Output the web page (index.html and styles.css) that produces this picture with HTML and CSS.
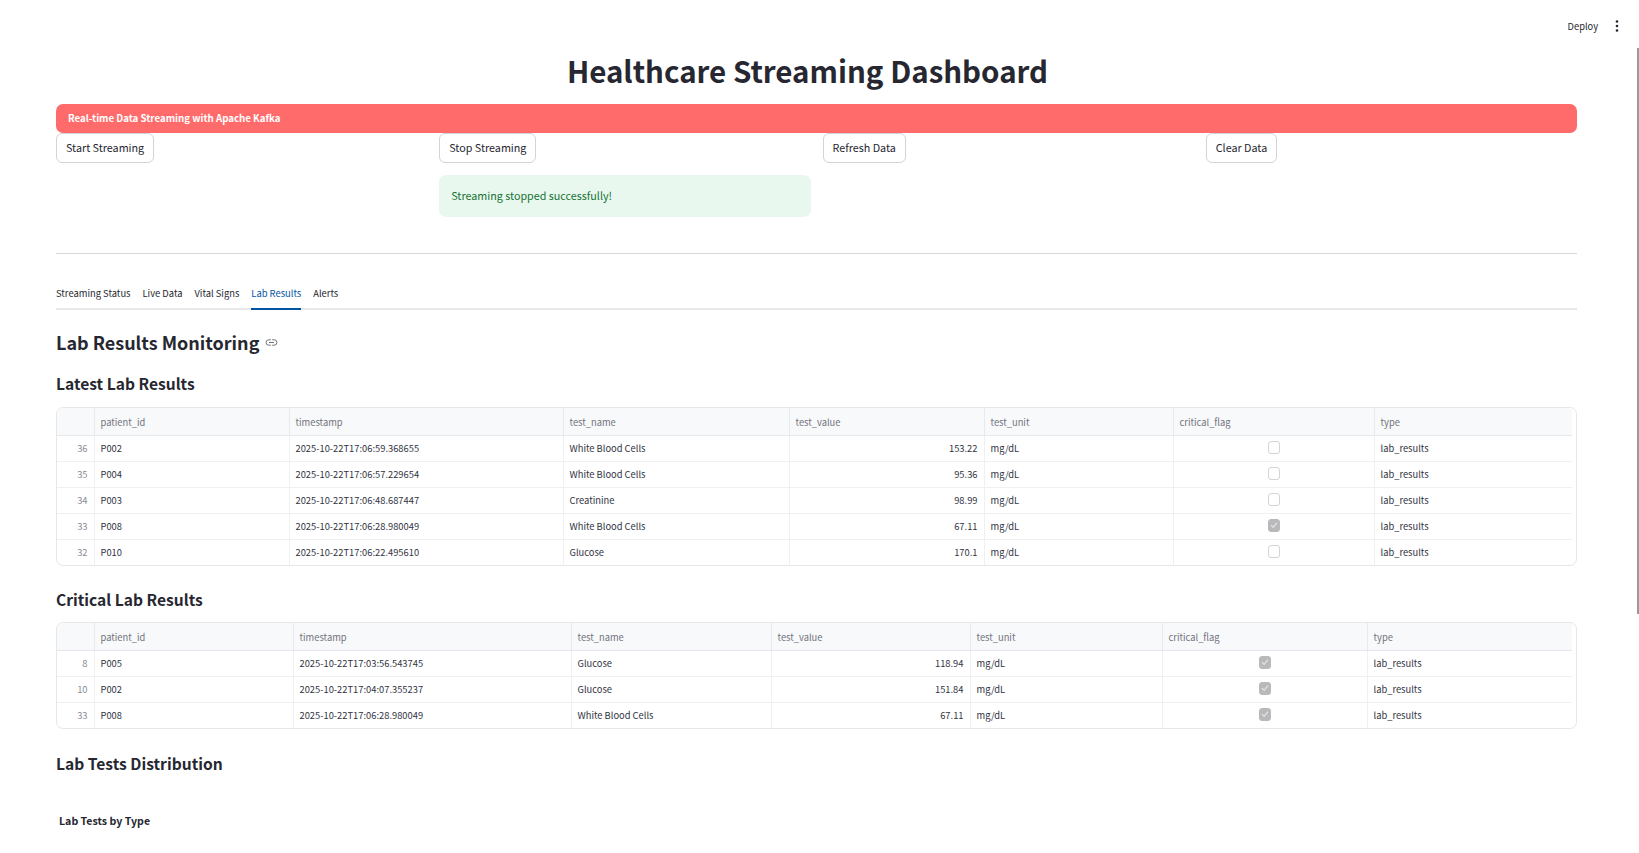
FILE: index.html
```html
<!DOCTYPE html>
<html lang="en">
<head>
  <meta charset="UTF-8">
  <meta name="viewport" content="width=device-width, initial-scale=1.0">
  <title>Healthcare Streaming Dashboard</title>
  <link rel="stylesheet" href="styles.css">
</head>
<body>

<header class="toolbar">
  <span class="deploy">Deploy</span>
  <svg class="menu-dots" width="4" height="12" viewBox="0 0 4 12"><circle cx="2" cy="1.5" r="1.3"/><circle cx="2" cy="6" r="1.3"/><circle cx="2" cy="10.5" r="1.3"/></svg>
</header>

<div class="scroll-thumb"></div>

<main class="page">
  <h1 class="title">Healthcare Streaming Dashboard</h1>
  <div class="banner">Real-time Data Streaming with Apache Kafka</div>

  <div class="controls">
    <div class="control"><button>Start Streaming</button></div>
    <div class="control">
      <button>Stop Streaming</button>
      <div class="success">Streaming stopped successfully!</div>
    </div>
    <div class="control"><button>Refresh Data</button></div>
    <div class="control"><button>Clear Data</button></div>
  </div>

  <hr class="divider">

  <nav class="tabs">
    <span class="tab">Streaming Status</span>
    <span class="tab">Live Data</span>
    <span class="tab">Vital Signs</span>
    <span class="tab active">Lab Results</span>
    <span class="tab">Alerts</span>
  </nav>

  <h2 class="section-title">Lab Results Monitoring
    <svg class="anchor" width="13" height="13" viewBox="0 0 24 24" fill="none" stroke="#6b6e76" stroke-width="1.8" stroke-linecap="round"><path d="M10 7H7a5 5 0 0 0 0 10h3"/><path d="M14 7h3a5 5 0 0 1 0 10h-3"/><path d="M8 12h8"/></svg>
  </h2>

  <h3 class="sub-title latest-title">Latest Lab Results</h3>
  <div class="table-wrap">
    <table class="data latest">
      <colgroup><col class="c-index"><col class="c-id"><col class="c-time"><col class="c-name"><col class="c-value"><col class="c-unit"><col class="c-flag"><col class="c-type"></colgroup>
      <thead><tr><th></th><th>patient_id</th><th>timestamp</th><th>test_name</th><th>test_value</th><th>test_unit</th><th>critical_flag</th><th>type</th></tr></thead>
      <tbody>
        <tr><td class="idx">36</td><td>P002</td><td>2025-10-22T17:06:59.368655</td><td>White Blood Cells</td><td class="num">153.22</td><td>mg/dL</td><td class="flag"><span class="check"></span></td><td>lab_results</td></tr>
        <tr><td class="idx">35</td><td>P004</td><td>2025-10-22T17:06:57.229654</td><td>White Blood Cells</td><td class="num">95.36</td><td>mg/dL</td><td class="flag"><span class="check"></span></td><td>lab_results</td></tr>
        <tr><td class="idx">34</td><td>P003</td><td>2025-10-22T17:06:48.687447</td><td>Creatinine</td><td class="num">98.99</td><td>mg/dL</td><td class="flag"><span class="check"></span></td><td>lab_results</td></tr>
        <tr><td class="idx">33</td><td>P008</td><td>2025-10-22T17:06:28.980049</td><td>White Blood Cells</td><td class="num">67.11</td><td>mg/dL</td><td class="flag"><span class="check on"><svg width="10" height="10" viewBox="0 0 10 10" fill="none" stroke="#e4e4e6" stroke-width="1.2"><path d="M2 5.2l2.1 2.2L8 2.6"/></svg></span></td><td>lab_results</td></tr>
        <tr><td class="idx">32</td><td>P010</td><td>2025-10-22T17:06:22.495610</td><td>Glucose</td><td class="num">170.1</td><td>mg/dL</td><td class="flag"><span class="check"></span></td><td>lab_results</td></tr>
      </tbody>
    </table>
  </div>

  <h3 class="sub-title critical-title">Critical Lab Results</h3>
  <div class="table-wrap table-critical">
    <table class="data critical">
      <colgroup><col class="c-index"><col class="c-id"><col class="c-time"><col class="c-name"><col class="c-value"><col class="c-unit"><col class="c-flag"><col class="c-type"></colgroup>
      <thead><tr><th></th><th>patient_id</th><th>timestamp</th><th>test_name</th><th>test_value</th><th>test_unit</th><th>critical_flag</th><th>type</th></tr></thead>
      <tbody>
        <tr><td class="idx">8</td><td>P005</td><td>2025-10-22T17:03:56.543745</td><td>Glucose</td><td class="num">118.94</td><td>mg/dL</td><td class="flag"><span class="check on"><svg width="10" height="10" viewBox="0 0 10 10" fill="none" stroke="#e4e4e6" stroke-width="1.2"><path d="M2 5.2l2.1 2.2L8 2.6"/></svg></span></td><td>lab_results</td></tr>
        <tr><td class="idx">10</td><td>P002</td><td>2025-10-22T17:04:07.355237</td><td>Glucose</td><td class="num">151.84</td><td>mg/dL</td><td class="flag"><span class="check on"><svg width="10" height="10" viewBox="0 0 10 10" fill="none" stroke="#e4e4e6" stroke-width="1.2"><path d="M2 5.2l2.1 2.2L8 2.6"/></svg></span></td><td>lab_results</td></tr>
        <tr><td class="idx">33</td><td>P008</td><td>2025-10-22T17:06:28.980049</td><td>White Blood Cells</td><td class="num">67.11</td><td>mg/dL</td><td class="flag"><span class="check on"><svg width="10" height="10" viewBox="0 0 10 10" fill="none" stroke="#e4e4e6" stroke-width="1.2"><path d="M2 5.2l2.1 2.2L8 2.6"/></svg></span></td><td>lab_results</td></tr>
      </tbody>
    </table>
  </div>

  <h3 class="sub-title dist-title">Lab Tests Distribution</h3>
  <p class="chart-title">Lab Tests by Type</p>
</main>

</body>
</html>
```
FILE: styles.css
```css
html, body {
  height: 853px;
  overflow: hidden;
}

body {
  margin: 0;
  background-color: #fff;
  color: #262730;
  font-family: "Noto Sans CJK SC", "Noto Sans", sans-serif;
}

.toolbar {
  position: absolute;
  top: 18px;
  right: 20px;
  display: flex;
  align-items: center;
  gap: 17px;
  height: 16px;
}

.deploy {
  font-size: 9.3px;
  line-height: 16px;
}

.menu-dots {
  fill: #262730;
}

.scroll-thumb {
  position: absolute;
  top: 48px;
  right: 0;
  width: 2px;
  height: 566px;
  background-color: #9a9a9a;
}

.page {
  display: flex;
  flex-direction: column;
  padding: 0 62px 0 56px;
}

.title {
  margin: 45px 0 0;
  padding-right: 18px;
  font-size: 29.5px;
  line-height: 50px;
  font-weight: 700;
  text-align: center;
}

.banner {
  margin-top: 9px;
  height: 29px;
  padding: 0 12px;
  border-radius: 7px;
  background-color: #ff6b6b;
  color: #fff;
  font-size: 9.7px;
  font-weight: 700;
  line-height: 29px;
}

.controls {
  display: grid;
  grid-template-columns: repeat(4, 1fr);
  column-gap: 12px;
}

.control {
  display: flex;
  flex-direction: column;
  align-items: flex-start;
}

button {
  height: 30px;
  padding: 0 9px 2px;
  background-color: #fff;
  border: 1px solid #d3d4d8;
  border-radius: 6px;
  color: #262730;
  font-family: inherit;
  font-size: 10.75px;
  line-height: 25px;
}

.success {
  box-sizing: border-box;
  width: 100%;
  height: 42px;
  margin-top: 12px;
  padding: 0 12px;
  border-radius: 7px;
  background-color: #e8f8ee;
  color: #177233;
  font-size: 10.75px;
  line-height: 41px;
}

.divider {
  width: 100%;
  height: 1px;
  margin: 36px 0 0;
  border: 0;
  background-color: #d5d6d9;
}

.tabs {
  display: flex;
  gap: 12px;
  height: 56px;
  box-sizing: border-box;
  border-bottom: 2px solid #e8e8ea;
}

.tab {
  margin-top: 31px;
  height: 23px;
  font-size: 9.4px;
  line-height: 16px;
}

.tab.active {
  box-sizing: border-box;
  height: 25px;
  margin-bottom: -2px;
  color: #0054a3;
  border-bottom: 2px solid #0054a3;
}

.section-title {
  display: flex;
  align-items: center;
  gap: 6px;
  margin: 19px 0 0;
  font-size: 18px;
  line-height: 26px;
  font-weight: 600;
}

.sub-title {
  margin: 0;
  font-size: 15.6px;
  line-height: 24px;
  font-weight: 600;
}

.latest-title {
  margin-top: 16px;
}

.critical-title {
  margin-top: 21px;
}

.dist-title {
  margin-top: 22px;
}

.table-wrap {
  margin-top: 12px;
  padding-right: 4px;
  border: 1px solid #e6e7ea;
  border-radius: 7px;
  overflow: hidden;
}

.table-critical {
  margin-top: 11px;
}

.data {
  width: 100%;
  border-collapse: collapse;
  table-layout: fixed;
  font-size: 9.35px;
}

.data th,
.data td {
  padding: 0 6px;
  border-right: 1px solid #f0f0f2;
  border-bottom: 1px solid #f0f0f2;
  text-align: left;
  white-space: nowrap;
}

.data th:last-child,
.data td:last-child {
  border-right: 0;
}

.data tbody tr:last-child td {
  border-bottom: 0;
}

.data th {
  height: 27px;
  background-color: #f8f9fb;
  border-bottom-color: #e6e7ea;
  border-right-color: #e8e9ec;
  color: #71737c;
  font-weight: 400;
}

.data td {
  height: 24px;
  padding-bottom: 1px;
  color: #31333f;
}

.data td.idx {
  color: #8a8c94;
  text-align: right;
}

.data td.num {
  text-align: right;
}

.data td.flag {
  text-align: center;
}

.check {
  display: inline-flex;
  align-items: center;
  justify-content: center;
  box-sizing: border-box;
  width: 12px;
  height: 13px;
  margin-bottom: 2px;
  border: 1px solid #d3d4d8;
  border-radius: 3px;
  vertical-align: middle;
}

.check.on {
  background-color: #b9b9bc;
  border-color: #b9b9bc;
}

.latest .c-index, .critical .c-index { width: 37px; }
.latest .c-id { width: 195px; }
.latest .c-time { width: 274px; }
.latest .c-name { width: 226px; }
.latest .c-value { width: 195px; }
.latest .c-unit { width: 189px; }
.latest .c-flag { width: 201px; }

.critical .c-id { width: 199px; }
.critical .c-time { width: 278px; }
.critical .c-name { width: 200px; }
.critical .c-value { width: 199px; }
.critical .c-unit { width: 192px; }
.critical .c-flag { width: 205px; }

.chart-title {
  margin: 37px 0 0 3px;
  font-size: 10.6px;
  line-height: 18px;
  font-weight: 700;
}
```
